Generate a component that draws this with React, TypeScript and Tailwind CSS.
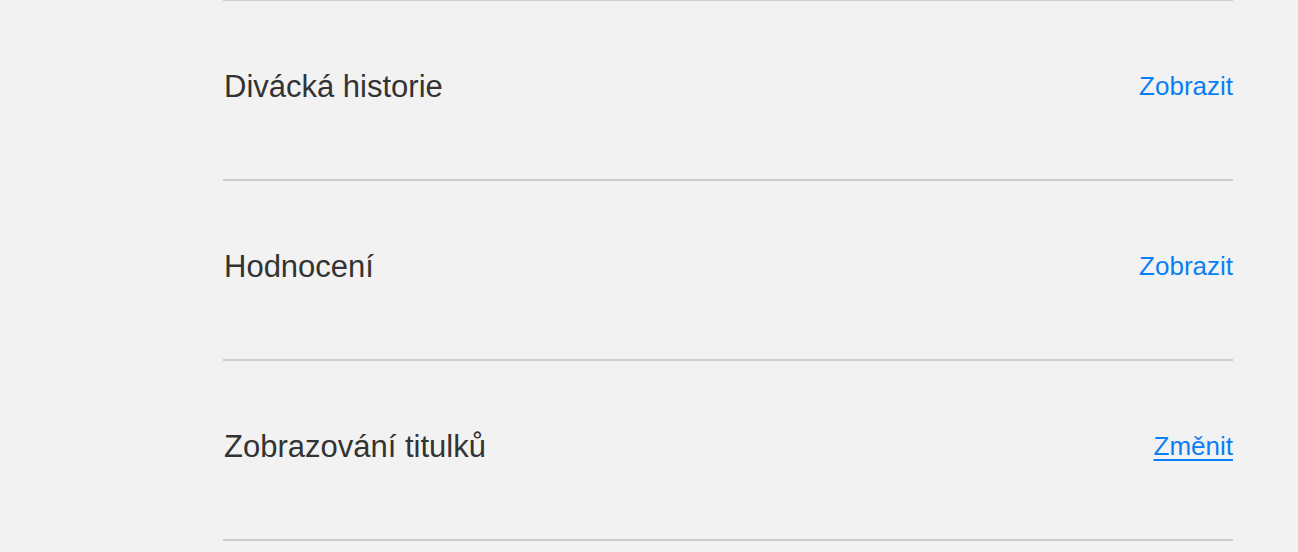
const rows = [
  { label: "Divácká historie", action: "Zobrazit", underline: false },
  { label: "Hodnocení", action: "Zobrazit", underline: false },
  { label: "Zobrazování titulků", action: "Změnit", underline: true },
];

export default function App() {
  return (
    <main className="min-h-screen bg-[#f2f2f2] font-['Liberation_Sans',Arial,sans-serif] overflow-hidden">
      <div className="ml-[223px] w-[1010px] -mt-px border-t-2 border-[#cccccc]">
        {rows.map((row) => (
          <div
            key={row.label}
            className="h-[180px] border-b-2 border-[#cccccc] flex items-center justify-between pb-2"
          >
            <span className="text-[31px] leading-none text-[#333333] pl-px">{row.label}</span>
            <a
              href="#"
              className={
                row.underline
                  ? "text-[26px] leading-none text-[#0a7ff5] underline underline-offset-4"
                  : "text-[26px] leading-none text-[#0a7ff5]"
              }
            >
              {row.action}
            </a>
          </div>
        ))}
      </div>
    </main>
  );
}
